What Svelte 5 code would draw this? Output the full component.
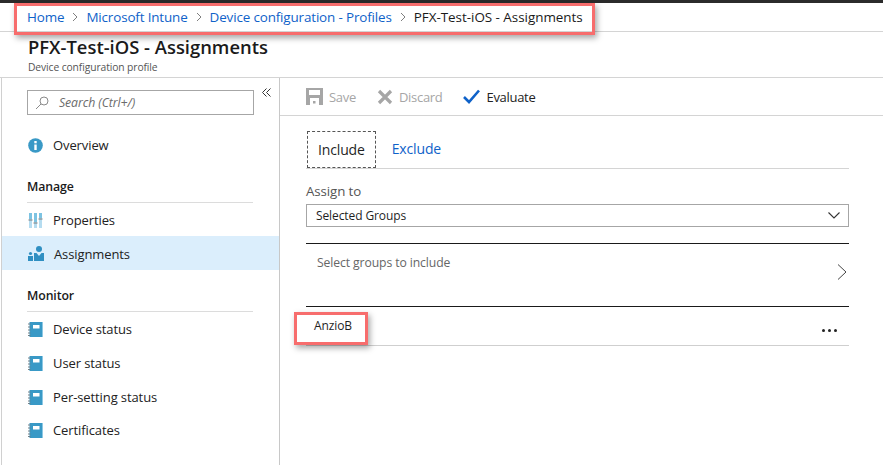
<script>
  const crumbs = ['Home', 'Microsoft Intune', 'Device configuration - Profiles'];
  const monitor = ['Device status', 'User status', 'Per-setting status', 'Certificates'];
</script>

{#snippet bookIcon()}
  <svg class="icon" viewBox="0 0 15 15" width="15" height="15">
    <rect x="1.500" y="0" width="13.500" height="15" fill="#3999c6" />
    <path d="M14.500 0v15" stroke="#8cc8e4" />
    <rect x="5" y="3" width="6.500" height="3.500" fill="#fff" />
    <path d="M0 2h2.500M0 5h2.500M0 8h2.500M0 11h2.500M0 13.500h2.500" stroke="#6f7f88" />
  </svg>
{/snippet}

<div class="page">
  <div class="topbar"></div>

  <nav class="crumbs">
    {#each crumbs as crumb}
      <a href="#top" class="crumb">{crumb}</a>
      <svg class="sep" viewBox="0 0 8 10" width="8" height="10"><path d="M2 1l4 4-4 4" fill="none" stroke="#7f7f7f" /></svg>
    {/each}
    <span class="crumb current">PFX-Test-iOS - Assignments</span>
  </nav>

  <header class="blade-head">
    <h1>PFX-Test-iOS - Assignments</h1>
    <p>Device configuration profile</p>
  </header>

  <div class="blade">
    <aside class="side">
      <div class="search-row">
        <div class="search">
          <svg viewBox="0 0 14 14" width="14" height="14"><circle cx="9" cy="5" r="4" fill="none" stroke="#8a8a8a" /><path d="M6 8l-5 5" stroke="#8a8a8a" /></svg>
          <span>Search (Ctrl+/)</span>
        </div>
        <svg class="collapse" viewBox="0 0 9 9" width="9" height="9"><path d="M4.500 0.500l-4 4 4 4M8.500 0.500l-4 4 4 4" fill="none" stroke="#333" /></svg>
      </div>

      <div class="item first">
        <svg class="icon" viewBox="0 0 15 15" width="15" height="15">
          <circle cx="7.500" cy="7.500" r="7.300" fill="#3999c6" />
          <rect x="6.300" y="6.500" width="2.400" height="5.500" fill="#fff" />
          <rect x="6.300" y="3" width="2.400" height="2.300" fill="#fff" />
        </svg>
        <span>Overview</span>
      </div>

      <h2 class="group manage">Manage</h2>
      <div class="item props">
        <svg class="icon" viewBox="0 0 15 15" width="15" height="15">
          <path d="M2.500 0v15M7.500 0v15M12.500 0v15" stroke="#b5dcf0" stroke-width="3" />
          <path d="M2.500 0v6M7.500 0v9M12.500 0v5" stroke="#7cc3e2" stroke-width="3" />
          <path d="M0.500 7h4M5.500 10h4M10.500 6h4" stroke="#7a7a7a" stroke-width="1.200" />
        </svg>
        <span>Properties</span>
      </div>
      <div class="item active">
        <svg class="icon" viewBox="0 0 16 15" width="16" height="15">
          <circle cx="11" cy="3" r="3" fill="#2f8fc2" />
          <path d="M6 15V7h2.500l2.500 3 2.500-3H16v8z" fill="#2f8fc2" />
          <circle cx="2.500" cy="7.500" r="1.600" fill="#2f8fc2" />
          <path d="M0 15v-5h5v5z" fill="#2f8fc2" />
        </svg>
        <span>Assignments</span>
      </div>

      <h2 class="group monitor">Monitor</h2>
      {#each monitor as label}
        <div class="item">
          {@render bookIcon()}
          <span>{label}</span>
        </div>
      {/each}
    </aside>

    <main class="main">
      <div class="toolbar">
        <div class="tool off">
          <svg viewBox="0 0 17 17" width="17" height="17">
            <path d="M0 0h17v17H0z" fill="#a6a6a6" />
            <rect x="3" y="2" width="11" height="5" fill="#fff" />
            <rect x="4" y="10" width="9" height="7" fill="#fff" />
            <rect x="7" y="13" width="2.500" height="2.500" fill="#a6a6a6" />
          </svg>
          <span>Save</span>
        </div>
        <div class="tool off">
          <svg viewBox="0 0 16 16" width="16" height="16"><path d="M2 2l12 12M14 2L2 14" stroke="#a6a6a6" stroke-width="3.200" /></svg>
          <span>Discard</span>
        </div>
        <div class="tool">
          <svg viewBox="0 0 17 15" width="17" height="15"><path d="M1 8l5 5L16 1.500" fill="none" stroke="#0f62c9" stroke-width="2.600" /></svg>
          <span>Evaluate</span>
        </div>
      </div>

      <div class="content">
        <div class="tabs">
          <div class="tab selected">Include</div>
          <div class="tab link">Exclude</div>
        </div>

        <div class="assign-label">Assign to</div>
        <div class="select">
          <span>Selected Groups</span>
          <svg viewBox="0 0 12 7" width="12" height="7"><path d="M0.500 0.500L6 6l5.500-5.500" fill="none" stroke="#333" stroke-width="1.100" /></svg>
        </div>

        <div class="picker">
          <span>Select groups to include</span>
          <svg viewBox="0 0 10 16" width="10" height="16"><path d="M1 0.500L9 8l-8 7.500" fill="none" stroke="#444" /></svg>
        </div>

        <div class="group-row">
          <span>AnzioB</span>
          <div class="dots"><i></i><i></i><i></i></div>
        </div>
      </div>
    </main>
  </div>

  <div class="mark mark-crumbs"></div>
  <div class="mark mark-group"></div>
</div>

<style>
  :global(body) { margin: 0; background: #fff; }

  .page {
    position: relative; width: 883px; height: 465px; overflow: hidden;
    display: flex; flex-direction: column;
    font-family: "Open Sans", "Liberation Sans", sans-serif;
    font-size: 13px; color: #1f1f1f; background: #fff;
  }

  .topbar { height: 3px; background: #2b2b2b; flex-shrink: 0; }

  .crumbs {
    height: 29px; flex-shrink: 0; box-sizing: border-box;
    display: flex; align-items: center; gap: 6px; padding: 0 0 1px 27px;
    border-bottom: 1px solid #d4d4d4;
  }
  .crumb { font-size: 13.450px; color: #0f62c9; text-decoration: none; white-space: nowrap; letter-spacing: -0.150px; }
  .crumb.current { color: #1a1a1a; letter-spacing: -0.030px; }
  .sep { margin: 0 1px; }

  .blade-head {
    height: 46px; flex-shrink: 0; box-sizing: border-box;
    padding-left: 28px; border-bottom: 1px solid #d4d4d4;
  }
  .blade-head h1 { margin: 3px 0 0; font-size: 18.400px; line-height: 24px; font-weight: 600; color: #1a1a1a; }
  .blade-head p { margin: 2px 0 0; font-size: 10.300px; line-height: 13px; color: #555; letter-spacing: -0.100px; }

  .blade { flex: 1; display: flex; min-height: 0; }

  .side {
    width: 279px; flex-shrink: 0; margin-left: 1px; box-sizing: border-box;
    border-left: 1px solid #d0d0d0; border-right: 1px solid #c8c8c8;
  }

  .search-row { display: flex; padding: 12px 0 0 25px; height: 50px; box-sizing: border-box; gap: 8px; }
  .search {
    width: 227px; height: 25px; box-sizing: border-box;
    border: 1px solid #a6a6a6; display: flex; align-items: center; gap: 10px; padding-left: 7px;
    color: #6b6b6b; font-size: 12.300px; font-style: italic; letter-spacing: -0.100px;
  }
  .collapse { margin-top: -2px; }

  .item {
    height: 34px; box-sizing: border-box; display: flex; align-items: center; gap: 10px; padding-left: 26px;
    font-size: 13px; color: #222; letter-spacing: -0.100px;
  }
  .item.first { margin-bottom: 8px; }
  .item.props { height: 33px; padding-top: 1px; }
  .item.active { background: #dbeefc; padding-top: 1px; }
  .item:last-child { margin-top: -1px; }
  .icon { flex-shrink: 0; }

  .group {
    margin: 0 26px 0 25px; height: 33px; box-sizing: border-box; padding-top: 8px;
    font-size: 12.300px; line-height: 17px; font-weight: 600; color: #1a1a1a;
    border-bottom: 1px solid #dcdcdc; letter-spacing: -0.100px;
  }
  .group.monitor { margin-top: 9px; }

  .main { flex: 1; min-width: 0; display: flex; flex-direction: column; }

  .toolbar {
    height: 38px; flex-shrink: 0; box-sizing: border-box; display: flex; align-items: center;
    gap: 21px; padding-left: 26px; border-bottom: 1px solid #d4d4d4;
  }
  .tool { display: flex; align-items: center; gap: 6px; font-size: 13px; color: #222; letter-spacing: -0.300px; }
  .tool.off { color: #a6a6a6; }

  .content { padding: 15px 34px 0 26px; }

  .tabs { display: flex; height: 38px; border-bottom: 1px solid #d4d4d4; box-sizing: border-box; }
  .tab { padding: 0 16px; line-height: 36px; font-size: 14px; letter-spacing: -0.150px; }
  .tab.selected { border: 1px dashed #555; margin-left: 1px; padding: 0 10px; }
  .tab.link { color: #0f62c9; }

  .assign-label { margin-top: 14px; height: 21px; font-size: 13.300px; line-height: 16px; color: #555; letter-spacing: -0.100px; }

  .select {
    height: 23px; box-sizing: border-box; border: 1px solid #a6a6a6;
    display: flex; align-items: center; justify-content: space-between; padding: 0 8px 1px 9px;
    font-size: 12px; letter-spacing: -0.100px;
  }

  .picker {
    margin-top: 16px; height: 64px; box-sizing: border-box;
    border-top: 1px solid #1a1a1a; border-bottom: 1px solid #1a1a1a;
    display: flex; justify-content: space-between; padding: 10px 2px 0 11px;
    font-size: 12.200px; line-height: 17px; color: #666; letter-spacing: -0.100px;
  }
  .picker svg { margin-top: 10px; }

  .group-row {
    height: 39px; box-sizing: border-box; border-bottom: 1px solid #cfcfcf;
    display: flex; align-items: center; justify-content: space-between; padding: 0 12px 2px 8px;
    font-size: 12px; letter-spacing: -0.100px;
  }
  .dots { display: flex; gap: 3px; margin-top: 11px; }
  .dots i { width: 3px; height: 3px; border-radius: 50%; background: #222; }

  .mark {
    position: absolute; box-sizing: border-box; border: 3px solid #f76d6d;
    box-shadow: 2px 3px 6px rgba(0, 0, 0, 0.35);
  }
  .mark-crumbs { left: 14px; top: 3px; width: 581px; height: 32px; }
  .mark-group { left: 294px; top: 312px; width: 74px; height: 33px; }
</style>
